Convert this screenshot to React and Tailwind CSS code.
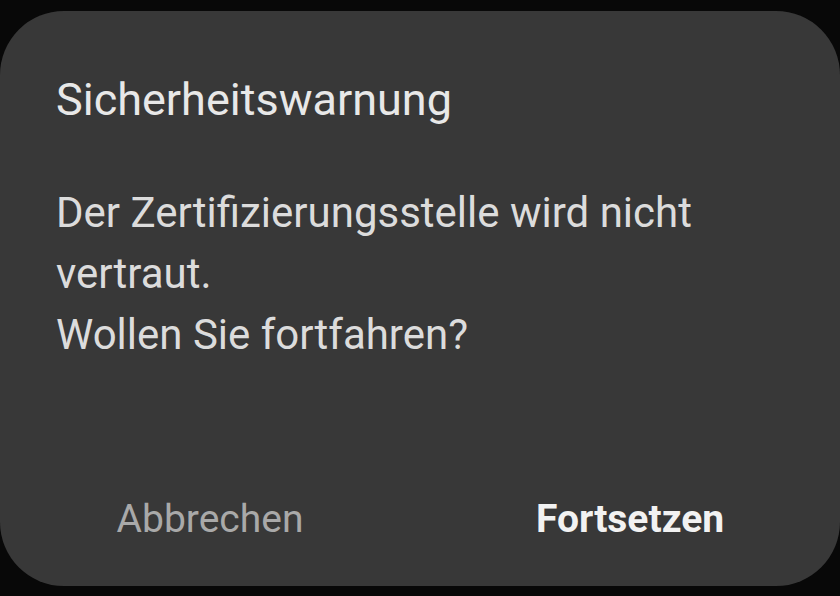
export default function App() {
  return (
    <div className="w-[840px] h-[596px] bg-[#080808] pt-[11px] pb-[10px]" style={{ fontFamily: 'Roboto, "Noto Sans", sans-serif' }}>
      <div className="h-full bg-[#383838] rounded-[64px] flex flex-col">
        <div className="pl-[56px] pt-[62px] text-[#e8e8e8]">
          <h1 className="text-[45px] leading-[53px]">Sicherheitswarnung</h1>
          <p className="mt-[56px] text-[42px] leading-[61px] text-[#dcdcdc]">
            Der Zertifizierungsstelle wird nicht
            <br />
            vertraut.
            <br />
            Wollen Sie fortfahren?
          </p>
        </div>
        <div className="mt-auto mb-[44px] grid grid-cols-2 text-[39px] leading-[46px]">
          <button className="text-center text-[#a9a9a9]">Abbrechen</button>
          <button className="text-center font-bold text-[#f2f2f2]">Fortsetzen</button>
        </div>
      </div>
    </div>
  );
}
